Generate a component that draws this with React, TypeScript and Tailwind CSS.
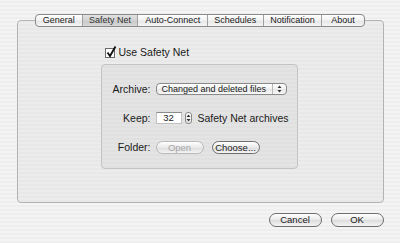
const tabs = ["General", "Safety Net", "Auto-Connect", "Schedules", "Notification", "About"];
const tabWidths = [46, 56, 70, 56, 59, 43];

function UpDown() {
  return (
    <svg width="5" height="8" viewBox="0 0 5 8">
      <path d="M0.5 3 L2.5 0.5 L4.5 3 Z" fill="#333" />
      <path d="M0.5 5 L2.5 7.5 L4.5 5 Z" fill="#333" />
    </svg>
  );
}

function PillButton({ label, w, disabled }: { label: string; w: string; disabled?: boolean }) {
  return (
    <div
      className={`${w} rounded-full border flex items-center justify-center text-[9.5px] leading-none whitespace-nowrap bg-[linear-gradient(#ffffff,#e9e9e9_50%,#dcdcdc_51%,#f4f4f4)] ${
        disabled ? "border-[#b9b9b9] text-[#a8a8a8]" : "border-[#6e6e6e] text-[#1a1a1a]"
      }`}
    >
      {label}
    </div>
  );
}

export default function App() {
  return (
    <div
      className="w-[400px] h-[243px] overflow-hidden bg-[repeating-linear-gradient(0deg,#eeeeee_0px,#eeeeee_2px,#f4f4f4_2px,#f4f4f4_4px)] text-[#1a1a1a] whitespace-nowrap"
      style={{ fontFamily: '"Liberation Sans", Arial, sans-serif' }}
    >
      <div className="flex flex-col items-center pt-[14px]">
        {/* tabs */}
        <div className="relative z-10 flex h-[13px] w-[330px] rounded-[4px] border border-[#8a8a8a] bg-[linear-gradient(#ffffff,#f0f0f0_50%,#e4e4e4_51%,#f6f6f6)] overflow-hidden">
          {tabs.map((t, i) => (
            <div
              key={t}
              className={`flex items-center justify-center text-[9px] leading-none ${
                i > 0 ? "border-l border-[#a0a0a0]" : ""
              } ${t === "Safety Net" ? "bg-[linear-gradient(#e2e2e2,#d2d2d2_50%,#c8c8c8_51%,#d8d8d8)] text-[#333]" : ""}`}
              style={{ width: tabWidths[i] }}
            >
              {t}
            </div>
          ))}
        </div>

        {/* panel */}
        <div className="-mt-[7px] w-[367px] h-[183px] rounded-[4px] border border-[#b3b3b3] bg-[repeating-linear-gradient(0deg,#e8e8e8_0px,#e8e8e8_2px,#ececec_2px,#ececec_4px)] pl-[83px] pt-[26px]">
          <div className="flex items-center gap-[3px] h-[11px] ml-[4px]">
            <div className="relative w-[10px] h-[10px] border border-[#6b6b6b] bg-white">
              <svg className="absolute -top-[3px] left-0" width="11" height="12" viewBox="0 0 11 12">
                <path d="M1.5 6.5 L4 10 L9.5 0.5" stroke="#111" strokeWidth="1.8" fill="none" />
              </svg>
            </div>
            <span className="text-[10.5px] leading-none ml-[1px]">Use Safety Net</span>
          </div>

          <div className="mt-[6px] w-[197px] h-[105px] rounded-[4px] border border-[#c4c4c4] bg-[repeating-linear-gradient(0deg,#e0e0e0_0px,#e0e0e0_2px,#e4e4e4_2px,#e4e4e4_4px)] pt-[18px] pl-[5px]">
            <div className="grid grid-cols-[44px_1fr] gap-x-[5px] items-center">
              <div className="text-[10.5px] text-right leading-none">Archive:</div>
              <div className="w-[131px] h-[12px] rounded-[4px] border border-[#8a8a8a] bg-[linear-gradient(#ffffff,#f1f1f1_50%,#e6e6e6_51%,#f8f8f8)] flex items-center">
                <span className="flex-1 pl-[5px] text-[9px] leading-none">Changed and deleted files</span>
                <span className="h-full w-[14px] border-l border-[#b8b8b8] flex items-center justify-center">
                  <UpDown />
                </span>
              </div>

              <div className="mt-[17px] text-[10.5px] text-right leading-none">Keep:</div>
              <div className="mt-[17px] flex items-center">
                <div className="w-[26px] h-[12px] bg-white border border-[#c0c0c0] border-t-[#8a8a8a] flex items-center justify-center text-[9.5px] leading-none">
                  32
                </div>
                <div className="ml-[3px] w-[7px] h-[12px] rounded-[3px] border border-[#8a8a8a] bg-[linear-gradient(#ffffff,#e6e6e6)] flex items-center justify-center">
                  <UpDown />
                </div>
                <span className="ml-[6px] text-[10.5px] leading-none">Safety Net archives</span>
              </div>

              <div className="mt-[17px] text-[10.5px] text-right leading-none">Folder:</div>
              <div className="mt-[17px] flex items-center gap-[8px]">
                <PillButton label="Open" w="w-[48px] h-[13px]" disabled />
                <PillButton label="Choose..." w="w-[48px] h-[13px]" />
              </div>
            </div>
          </div>
        </div>

        {/* buttons */}
        <div className="w-[367px] flex justify-end gap-[9px] mt-[10px]">
          <PillButton label="Cancel" w="w-[53px] h-[14px]" />
          <PillButton label="OK" w="w-[53px] h-[14px]" />
        </div>
      </div>
    </div>
  );
}
